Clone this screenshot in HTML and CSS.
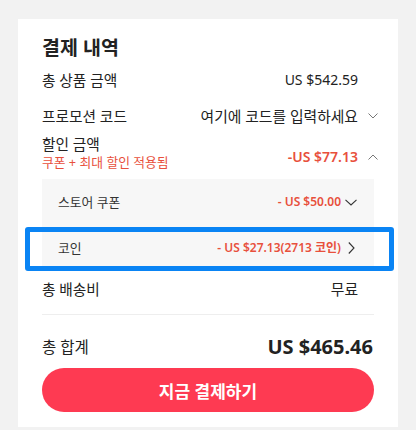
FILE: index.html
```html
<!DOCTYPE html>
<html lang="ko">
<head>
<meta charset="utf-8">
<link rel="stylesheet" href="styles.css">
</head>
<body>
<div class="card">
  <h2 class="title">결제 내역</h2>
  <div class="row">
    <span class="label">총 상품 금액</span>
    <span class="value pad">US $542.59</span>
  </div>
  <div class="row">
    <span class="label">프로모션 코드</span>
    <span class="value ko">여기에 코드를 입력하세요<svg class="chev" width="10" height="6" viewBox="0 0 10 6"><path d="M0.5 0.5L5 5L9.5 0.5" fill="none" stroke="#777" stroke-width="1"/></svg></span>
  </div>
  <div class="row discount">
    <div class="labels">
      <div class="label dlabel">할인 금액</div>
      <div class="sub">쿠폰 + 최대 할인 적용됨</div>
    </div>
    <span class="value red strong">-US $77.13<svg class="chev" width="10" height="6" viewBox="0 0 10 6"><path d="M0.5 5.5L5 1L9.5 5.5" fill="none" stroke="#777" stroke-width="1"/></svg></span>
  </div>
  <div class="panel">
    <div class="prow first">
      <span class="plabel">스토어 쿠폰</span>
      <span class="pvalue">- US $50.00<svg class="pchev" width="12" height="7" viewBox="0 0 12 7"><path d="M0.5 0.8L6 6L11.5 0.8" fill="none" stroke="#333" stroke-width="1.1"/></svg></span>
    </div>
    <div class="prow coin">
      <span class="plabel">코인</span>
      <span class="pvalue">- US $27.13(2713 코인)<svg class="pchev right" width="7" height="12" viewBox="0 0 7 12"><path d="M0.8 0.5L6 6L0.8 11.5" fill="none" stroke="#333" stroke-width="1.1"/></svg></span>
      <div class="highlight"></div>
    </div>
  </div>
  <div class="row ship">
    <span class="label">총 배송비</span>
    <span class="value pad ko">무료</span>
  </div>
  <div class="divider"></div>
  <div class="total">
    <span class="tlabel">총 합계</span>
    <span class="tvalue">US $465.46</span>
  </div>
  <button class="pay">지금 결제하기</button>
</div>
</body>
</html>
```
FILE: styles.css
```css
* { box-sizing: border-box; }
html, body {
  margin: 0;
  padding: 0;
  background: #f2f2f2;
  font-family: "Noto Sans", "Noto Sans CJK KR", sans-serif;
  color: #222;
}
.card {
  margin: 19px 0 0 18px;
  width: 380px;
  background: #fff;
  padding: 17px 24px 15px 24px;
}
.title {
  margin: 0 0 2px 0;
  height: 24px;
  line-height: 24px;
  font-size: 19.5px;
  font-weight: 700;
  color: #222;
}
.row {
  display: flex;
  justify-content: space-between;
  align-items: center;
  height: 36px;
  margin-right: -4px;
  font-size: 14px;
  line-height: 18px;
}
.label { color: #222; font-size: 14.7px; }
.value {
  display: flex;
  align-items: center;
  color: #222;
}
.value.ko { font-size: 14.8px; }
.value.pad { padding-right: 20px; }
.chev { margin-left: 10px; }
.red { color: #e8503c; }
.strong { font-weight: 600; font-size: 14px; }
.discount {
  height: 45px;
  padding: 1px 0 9px 0;
  align-items: flex-start;
}
.discount .value { padding-top: 13px; }
.labels {
  display: flex;
  flex-direction: column;
  gap: 1px;
}
.dlabel {
  height: 18px;
  line-height: 18px;
}
.sub {
  height: 16px;
  font-size: 12.8px;
  line-height: 16px;
  color: #e8503c;
}
.panel {
  background: #f7f7f7;
}
.prow {
  display: flex;
  justify-content: space-between;
  align-items: center;
  height: 45px;
  padding: 0 17px 0 16px;
  font-size: 12px;
  line-height: 16px;
  position: relative;
}
.prow.first { height: 46px; }
.plabel { color: #333; font-size: 12.8px; }
.pvalue {
  display: flex;
  align-items: center;
  color: #e8503c;
  font-weight: 600;
}
.pchev { margin-left: 4px; }
.pchev.right { margin-left: 7px; margin-right: 2px; }
.highlight {
  position: absolute;
  left: -17px;
  right: -20px;
  top: 2px;
  bottom: -1px;
  border: 5px solid #0a84f4;
  border-radius: 3px;
  pointer-events: none;
}
.ship { height: 38px; }
.divider {
  margin-top: 6px;
  height: 1px;
  background: #eeeeee;
}
.total {
  display: flex;
  justify-content: space-between;
  align-items: center;
  height: 53px;
  padding-top: 10px;
}
.tlabel {
  font-size: 15.5px;
  color: #222;
}
.tvalue {
  font-size: 20px;
  font-weight: 700;
  color: #222;
  margin-right: 1px;
}
.pay {
  display: block;
  width: 100%;
  height: 44px;
  border: none;
  border-radius: 22px;
  background: #fe3a52;
  color: #fff;
  font-family: "Noto Sans", "Noto Sans CJK KR", sans-serif;
  font-size: 17px;
  font-weight: 700;
  padding: 0;
}
```
